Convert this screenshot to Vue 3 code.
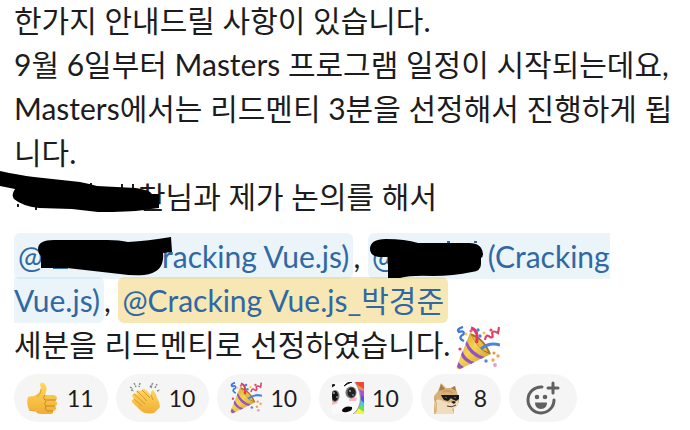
<script setup>
import { ref } from 'vue'

const reactions = ref([
  { id: 'thumbsup', label: '좋아요', count: 11 },
  { id: 'clap', label: '박수', count: 10 },
  { id: 'tada', label: '축하', count: 10 },
  { id: 'rainbow', label: '감동', count: 10 },
  { id: 'doge', label: '멋져요', count: 8 },
])
</script>

<template>
  <main class="message">
    <svg class="defs" aria-hidden="true">
      <defs>
        <linearGradient id="skin" x1="0" y1="0" x2="0" y2="1">
          <stop offset="0" stop-color="#ffd95c" />
          <stop offset="1" stop-color="#f0ae35" />
        </linearGradient>
        <linearGradient id="cone" x1="0" y1="0" x2="1" y2="1">
          <stop offset="0" stop-color="#c9952b" />
          <stop offset=".45" stop-color="#f7d353" />
          <stop offset="1" stop-color="#c08a26" />
        </linearGradient>
        <symbol id="tada" viewBox="0 0 44 44">
          <path d="M14 7 35 28 4 43Q0 44 .8 40Z" fill="url(#cone)" />
          <path d="M14 7Q28 11 35 28Q24 27 14 7Z" fill="#a8741e" />
          <path d="M16 10Q27 14 32 26Q23 24 16 10Z" fill="#e9bd45" />
          <path d="M10.700 15Q16 27 28.500 31L25 33Q13 29 9.500 18ZM6.500 25Q10 34 18.500 36L15 38Q7 35 5 29ZM2.500 36Q5 40 8 41L4 43 1 41Z" fill="#9253c7" />
          <path d="M15 2Q23 4 20.500 17" fill="none" stroke="#dc3d61" stroke-width="3" />
          <path d="M25 23Q33 16 44 19" fill="none" stroke="#4d82dd" stroke-width="3" />
          <path d="M7 1Q0 3 3 6Q8 4 8 8Q2 11 6 14L8 15" fill="none" stroke="#3e75e0" stroke-width="2.300" />
          <path d="M29 14Q30 7 34 11Q38 13 36 7Q37 4 42 7L43 1" fill="none" stroke="#dc4369" stroke-width="2.200" />
          <g>
            <circle cx="10" cy="8" r="1.600" fill="#f4d33f" />
            <circle cx="15" cy="5" r="1.600" fill="#e45c91" />
            <circle cx="22" cy="4" r="1.700" fill="#4b82dd" />
            <circle cx="24" cy="10" r="1.700" fill="#4b82dd" />
            <circle cx="28" cy="7" r="1.600" fill="#f1c83c" />
            <circle cx="35" cy="4" r="1.600" fill="#dd4770" />
            <circle cx="4" cy="23" r="1.600" fill="#d94065" />
            <circle cx="38" cy="27" r="1.600" fill="#e5964e" />
            <circle cx="42" cy="30" r="1.700" fill="#efa850" />
            <circle cx="37" cy="34" r="1.700" fill="#f0a351" />
            <circle cx="30" cy="35" r="1.700" fill="#5188dc" />
            <circle cx="39" cy="39" r="1.900" fill="#ee9bc4" />
          </g>
        </symbol>
      </defs>
    </svg>

    <p class="text">
      한가지 안내드릴 사항이 있습니다.<br />
      9월 6일부터 Masters 프로그램 일정이 시작되는데요,<br />
      Masters에서는 리드멘티 3분을 선정해서 진행하게 됩니다.<br />
      <span class="blot blot-name"><svg class="ink" width="1" height="1" aria-hidden="true">
        <path d="M77-24V-20M108-23V-15M119-23V-15M108-18H119M4 0V-3M22 3V0" fill="none" stroke="#1d1c1d" stroke-width="2" />
        <path d="M-14-36Q5-32 20-30L66-25Q76-23 83-21L122-19Q136-17 138-13H145V1Q136 2 130 3Q115 5 84 5L58 2 25 1Q8-1 0-8Q-3-12 1-18L-14-21Z" />
      </svg></span>찬님과 제가 논의를 해서
    </p>

    <p class="text">
      <a class="mention" href="#member-1">@<span class="blot blot-first"><svg class="ink" width="1" height="1" aria-hidden="true">
        <path d="M10 1H25" stroke="#3068a4" stroke-width="2" />
        <path d="M-5-18Q-5-27 11-27H64Q77-27 85-25Q105-26 128-30L129-15 120-14Q122 6 101 8Q90 9 77 7L24 1H-2V-11Q-5-14-5-18Z" />
      </svg></span>racking Vue.js)</a>,
      <a class="mention" href="#member-2">@<span class="blot blot-second"><svg class="ink" width="1" height="1" aria-hidden="true">
        <path d="M50-25H53M77-25H80" stroke="#3068a4" stroke-width="2" />
        <path d="M-27-18Q-27-28-11-28Q8-28 21-24H72Q85-24 86-13Q86-10 84-9V-3Q84 4 75 5Q56 9 36 9Q14 8 3 11H-9V-10H-18Q-27-11-27-18Z" />
      </svg></span>&nbsp;(Cracking Vue.js)</a>,
      <a class="mention mine" href="#member-3">@Cracking Vue.js_박경준</a><br />
      세분을 리드멘티로 선정하였습니다.<svg class="party" role="img" aria-label="축하"><use href="#tada" /></svg>
    </p>

    <div class="reactions">
      <button v-for="item in reactions" :key="item.id" type="button" class="reaction" :aria-label="`${item.label} ${item.count}`" @click="item.count++">
        <svg v-if="item.id === 'thumbsup'" class="emoji" viewBox="0 0 32 32">
          <path d="M1 15Q4 14 7 14Q12 12 14 7L13 2Q15-1 18 2Q21 7 18 13H27Q30 14 30 16Q30 18 28 19Q31 20 30 22Q30 24 28 24Q30 26 29 27Q28 29 26 29Q27 32 22 32H14Q10 32 8 29L2 28Q-1 21 1 15Z" fill="url(#skin)" />
          <path d="M18 13Q15 16 18 18H29M19 19Q16 22 19 24H28M19 24Q17 27 20 29H26" fill="none" stroke="#c98725" stroke-width="1" />
          <path d="M14 7Q15 11 10 15M2 28 8 29" fill="none" stroke="#dda034" stroke-width="1" />
        </svg>
        <svg v-else-if="item.id === 'clap'" class="emoji" viewBox="0 0 32 32">
          <path d="M4 12Q6 10 9 13L7 10Q8 7 11 9L13 8Q14 5 17 8L22 13Q21 9 24 8Q27 11 28 16Q31 20 31 25L25 31Q16 33 11 28L3 20Q2 18 5 17L3 14Z" fill="url(#skin)" />
          <path d="M5 12 16 22M8 9 18 19M13 8 21 16M5 17 13 24M22 13 24 18" fill="none" stroke="#d8982f" stroke-width="1" />
          <path d="M1 5 4 7M5 1 7 5M11 1 10 5M21 5 24 1M26 6 28 2M28 9 31 8M2 8 5 9M22 6 23 3" stroke="#858b8e" stroke-width="1.500" stroke-dasharray="2 .8" />
        </svg>
        <svg v-else-if="item.id === 'tada'" class="emoji" viewBox="0 0 44 44"><use href="#tada" width="44" height="44" /></svg>
        <svg v-else-if="item.id === 'rainbow'" class="emoji" viewBox="0 0 32 32">
          <path d="M20 0H32V32H20Z" fill="#ee4938" />
          <path d="M24 2 32 7V32H20Z" fill="#ff8a46" />
          <path d="M25 7 32 9V32H20Z" fill="#a456d5" />
          <path d="M27 12 32 15V32H20Z" fill="#5550e8" />
          <path d="M28 17 32 21V32H20Z" fill="#46c6ed" />
          <path d="M26 22 32 25V32H20Z" fill="#6be347" />
          <path d="M26 26 32 30V32H20Z" fill="#f6f341" />
          <path d="M0 0H23Q30 11 28 21Q26 29 21 32H0Z" fill="#fafafa" />
          <path d="M23 0Q30 11 28 21Q26 29 21 32" fill="none" stroke="#999" stroke-width="1" />
          <path d="M0 20Q4 18 6 21L0 23ZM17 17Q22 14 25 16L24 19 17 19Z" fill="#ffb4bb" />
          <ellipse cx="3" cy="14" rx="4.500" ry="6" fill="#777" />
          <ellipse cx="19" cy="10.500" rx="5.500" ry="6" fill="#777" />
          <ellipse cx="3" cy="14" rx="3" ry="5" fill="#111" />
          <ellipse cx="19.500" cy="10.500" rx="4" ry="5" fill="#222" />
          <circle cx="2" cy="11" r=".8" fill="#fff" />
          <circle cx="5" cy="15" r=".8" fill="#ddd" />
          <circle cx="18" cy="9" r=".8" fill="#fff" />
          <circle cx="21" cy="13" r=".8" fill="#bbb" />
          <path d="M12 4Q15 0 20 0Q16 1 12 4ZM0 3Q2 2 3 3L0 5Z" fill="#111" stroke="#111" />
          <path d="M10 28Q13 23 20 25Q21 29 15 30Q10 31 10 28Z" fill="#080808" />
        </svg>
        <svg v-else class="emoji" viewBox="0 0 32 32">
          <path d="M0 32V14L4 9 7 1 12 6H17L21 4 23 10 25 17Q25 24 20 26L20 32Z" fill="#d9b27a" />
          <path d="M5 9 7 2 11 7ZM17 6 21 4 22 9Z" fill="#a97c48" />
          <path d="M0 19Q5 16 9 19L15 21 21 18Q25 19 24 22Q23 26 18 27L20 32H2Z" fill="#efddbd" />
          <path d="M9 10Q13 7 19 11" fill="none" stroke="#c99d66" stroke-width="2" />
          <path d="M1 16Q3 22 2 30" fill="none" stroke="#c7a068" stroke-width="1" />
          <path d="M7 13 25 13V17L22 19 18 17 17 16 14 19 10 18 8 15Z" fill="#17191b" />
          <path d="M11 15 13 16M20 15 22 16" stroke="#656b70" />
          <path d="M17 20Q20 18 22 20L20 22Z" fill="#222" />
          <path d="M13 24Q18 26 22 23" fill="none" stroke="#4b3828" stroke-width="1" />
        </svg>
        <span>{{ item.count }}</span>
      </button>
      <button type="button" class="reaction add" aria-label="반응 추가">
        <svg class="smile" viewBox="0 0 34 34" fill="none" stroke="#616061" stroke-width="3" stroke-linecap="round">
          <path d="M16 6A13 13 0 1 0 28 19M27 2V12M22 7H32" />
          <circle cx="11" cy="16" r="2.300" fill="#616061" stroke="none" />
          <circle cx="19" cy="16" r="2.300" fill="#616061" stroke="none" />
          <path d="M9 21.500H21Q21 28 15 28Q9 28 9 21.500Z" fill="#616061" stroke="none" />
        </svg>
      </button>
    </div>
  </main>
</template>

<style>
body {
  margin: 0;
  background: #fff;
}
</style>

<style scoped>
.message {
  margin-top: -2px;
  padding: 0 14px 8px;
  overflow: hidden;
  color: #1d1c1d;
  font-family: Lato, "Noto Sans CJK KR", sans-serif;
}
.defs {
  position: absolute;
  width: 0;
  height: 0;
}
.text {
  margin: 0 0 16px;
  font-size: 30px;
  line-height: 44px;
}
.text + .text {
  margin-bottom: 8px;
}
.mention {
  padding: 5px 4px;
  border-radius: 6px;
  background: rgba(29, 134, 189, 0.09);
  color: #3068a4;
  text-decoration: none;
}
.mine {
  background: rgba(235, 195, 70, 0.4);
}
.blot {
  display: inline-block;
  position: relative;
  height: 0;
}
.blot-name {
  width: 124px;
}
.blot-first {
  width: 119px;
}
.blot-second {
  width: 83px;
}
.ink {
  position: absolute;
  top: -1px;
  left: 0;
  overflow: visible;
}
.party {
  width: 44px;
  height: 44px;
  margin: -8px 0 -8px 6px;
  vertical-align: -6px;
}
.reactions {
  display: flex;
  flex-wrap: wrap;
  gap: 8px;
}
.reaction {
  display: flex;
  align-items: center;
  gap: 8px;
  height: 48px;
  padding: 0 14px 0 13px;
  border: 0;
  border-radius: 24px;
  background: #f5f5f5;
  color: #1d1c1d;
  font: 23px Lato, sans-serif;
  cursor: pointer;
}
.emoji {
  width: 32px;
  height: 32px;
}
.add {
  padding: 0 17px;
}
.smile {
  width: 34px;
  height: 34px;
}
</style>
